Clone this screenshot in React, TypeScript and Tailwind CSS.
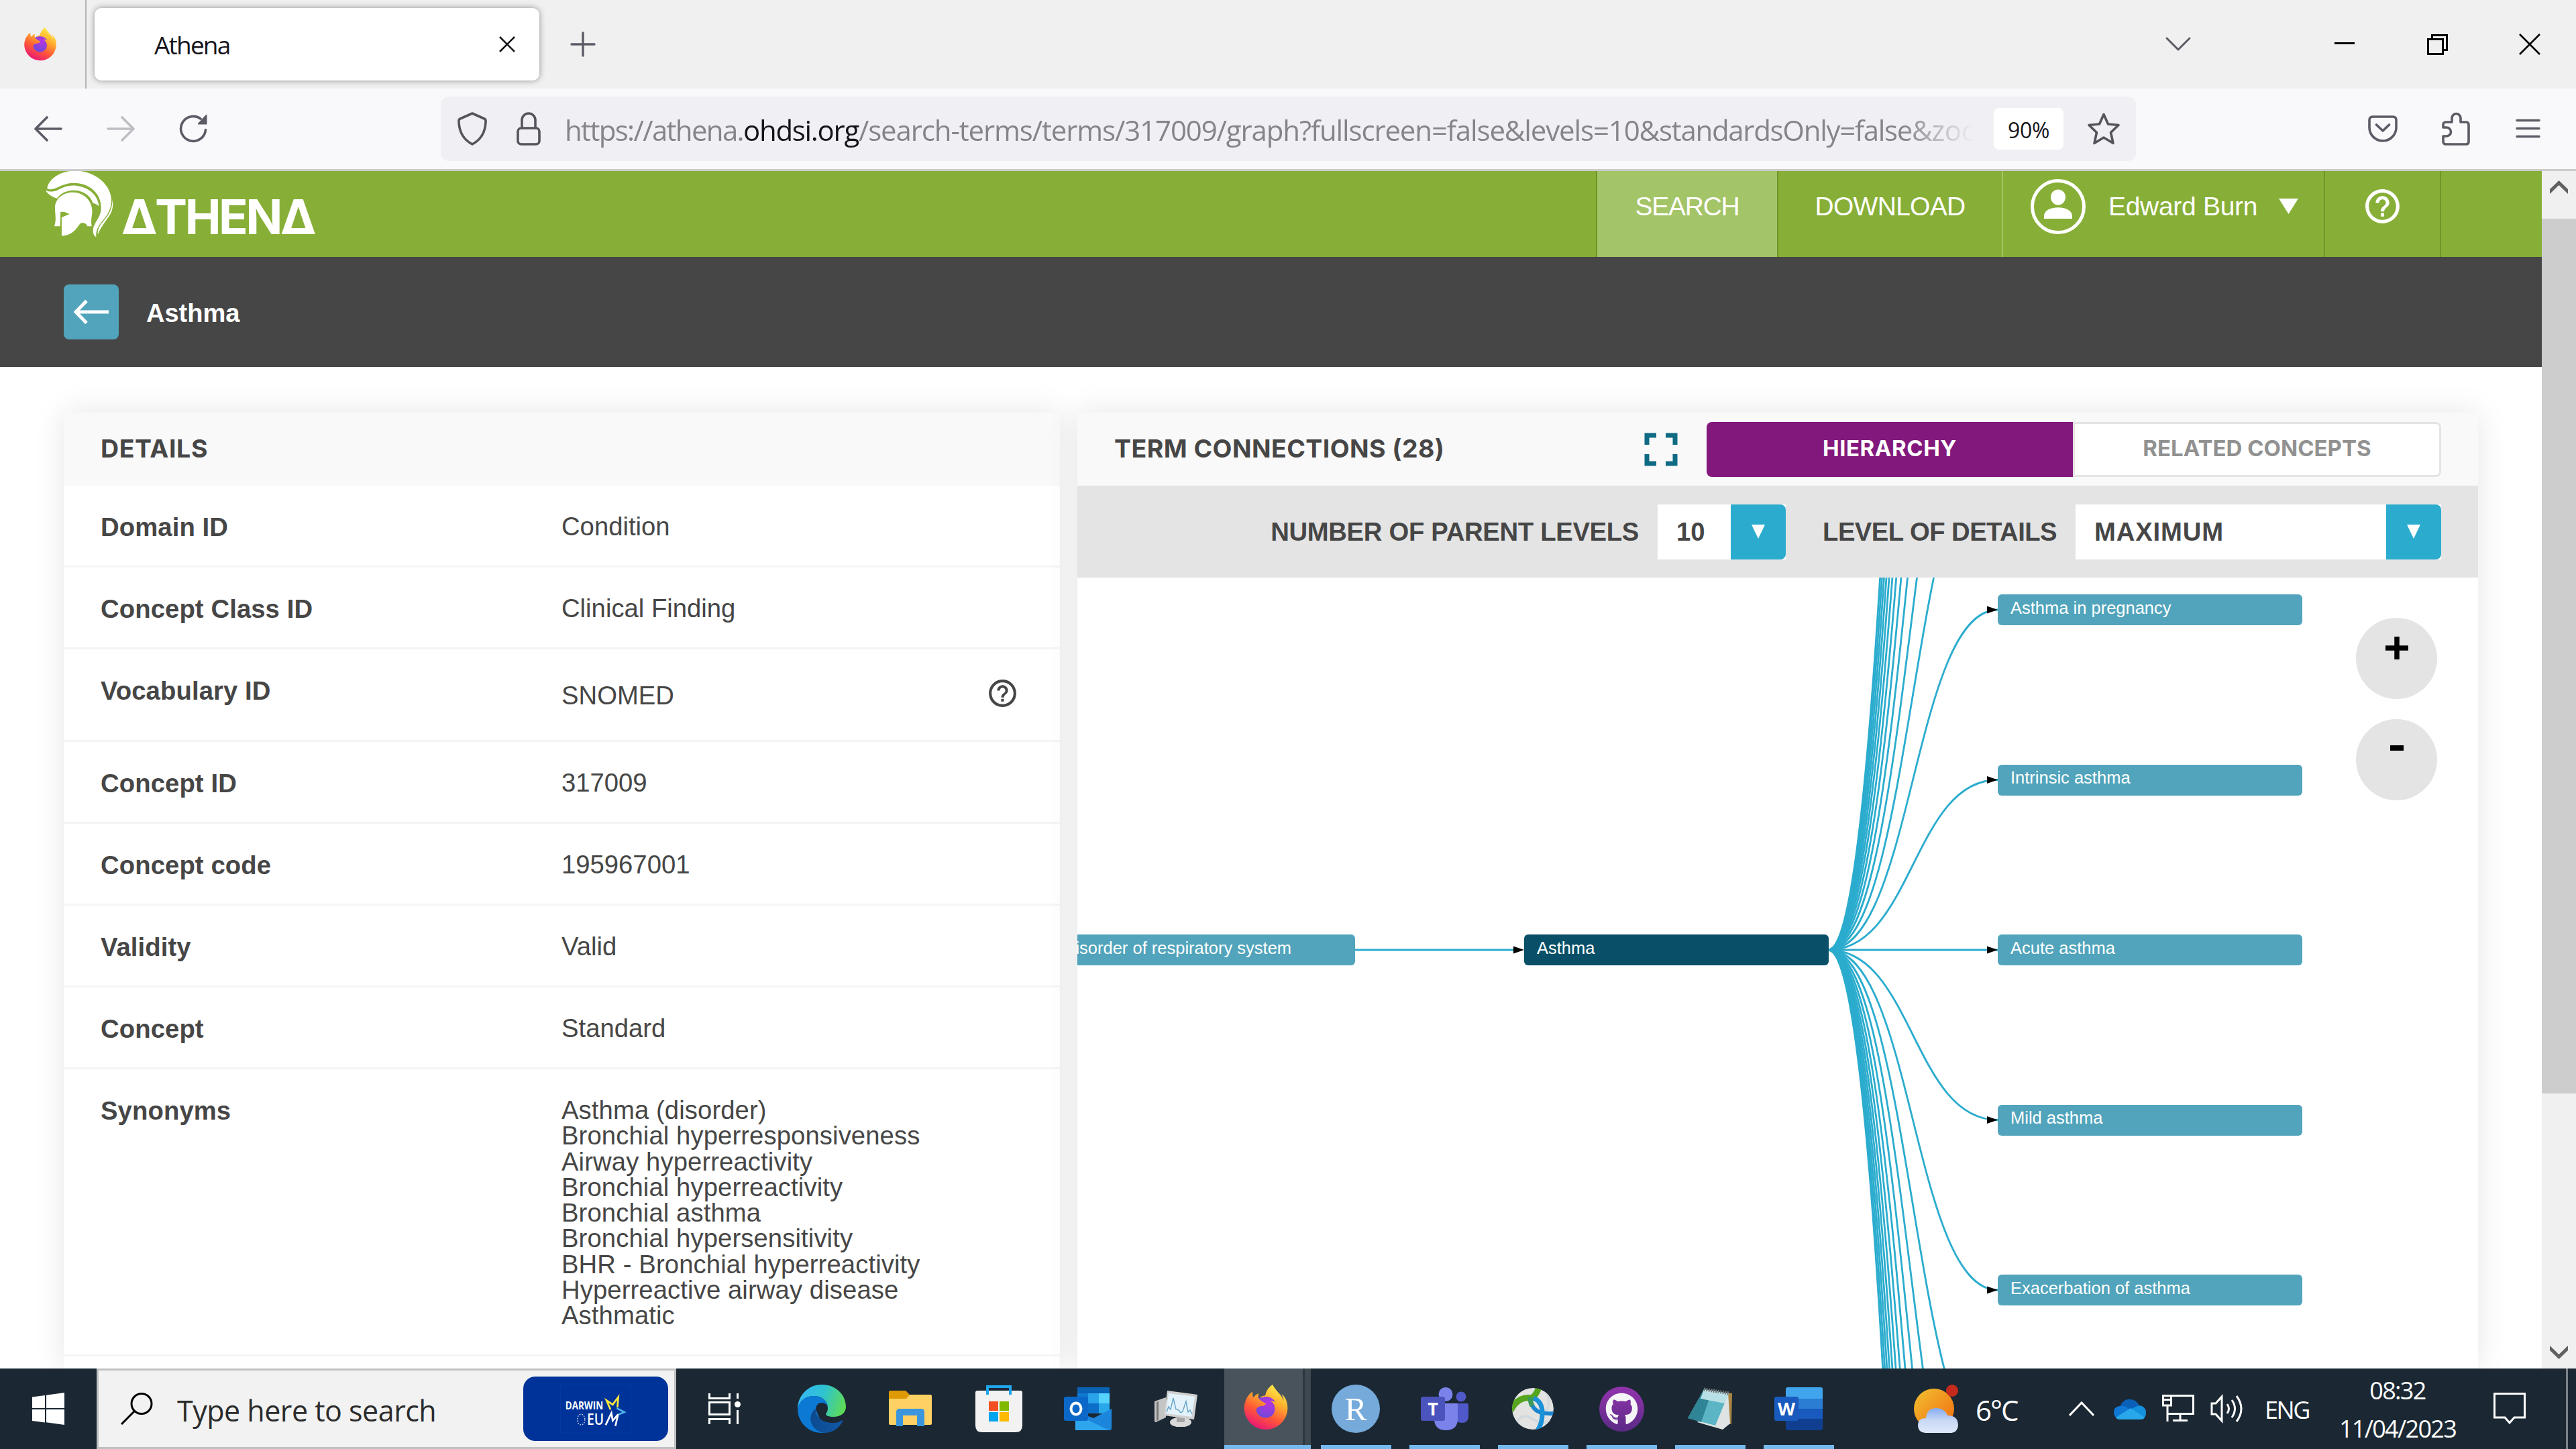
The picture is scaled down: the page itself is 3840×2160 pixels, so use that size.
import React from "react";
import { MdFullscreen, MdHelpOutline } from "react-icons/md";
import { FaFirefoxBrowser, FaGithub } from "react-icons/fa";

const SANS = "font-['Liberation_Sans',sans-serif]";
const UI = "font-['Open_Sans',sans-serif]";
const DISPLAY = "font-['Inter',sans-serif]";

const rows = [
  ["Domain ID", "Condition"],
  ["Concept Class ID", "Clinical Finding"],
  ["Vocabulary ID", "SNOMED"],
  ["Concept ID", "317009"],
  ["Concept code", "195967001"],
  ["Validity", "Valid"],
  ["Concept", "Standard"],
];

const synonyms = [
  "Asthma (disorder)",
  "Bronchial hyperresponsiveness",
  "Airway hyperreactivity",
  "Bronchial hyperreactivity",
  "Bronchial asthma",
  "Bronchial hypersensitivity",
  "BHR - Bronchial hyperreactivity",
  "Hyperreactive airway disease",
  "Asthmatic",
];

function Firefox({ size, id }: { size: number; id: string }) {
  return (
    <span className="relative flex shrink-0">
      <svg width={size} height={size} viewBox="0 0 64 64">
        <defs>
          <linearGradient id={id} x1="0.8" y1="0" x2="0.3" y2="1">
            <stop offset="0" stopColor="#fff44f" />
            <stop offset="0.35" stopColor="#ffb02e" />
            <stop offset="0.65" stopColor="#ff5a36" />
            <stop offset="1" stopColor="#e8137a" />
          </linearGradient>
          <radialGradient id={id + "g"} cx="0.6" cy="0.3" r="0.8">
            <stop offset="0" stopColor="#b833e1" />
            <stop offset="1" stopColor="#5a4fd8" />
          </radialGradient>
        </defs>
        <circle cx="32" cy="33" r="17" fill={`url(#${id}g)`} />
      </svg>
      <FaFirefoxBrowser size={size} className="absolute inset-0" style={{ fill: `url(#${id})` }} />
    </span>
  );
}

function TabStrip() {
  return (
    <div className="flex h-[132px] shrink-0 items-center bg-[#f0f0f0]">
      <div className="flex h-full w-[129px] items-center border-r-2 border-[#b4b4b4] pl-[35px]">
        <Firefox size={50} id="ffTab" />
      </div>
      <div className="ml-3 flex h-[108px] w-[663px] items-center justify-between rounded-[10px] bg-white pr-[34px] pl-[89px] shadow-[0_0_10px_rgba(0,0,0,0.4)]">
        <span className={`${UI} pt-px text-[37px] leading-none tracking-[-1.8px] text-[#15141a]`}>Athena</span>
        <svg width="28" height="28" viewBox="0 0 28 28" stroke="#15141a" strokeWidth="2.6" fill="none">
          <path d="M3 3 25 25M25 3 3 25" />
        </svg>
      </div>
      <svg className="ml-[46px]" width="38" height="38" viewBox="0 0 38 38" stroke="#5b5b66" strokeWidth="3.4" strokeLinecap="round">
        <path d="M19 2v34M2 19h34" />
      </svg>
      <div className="flex-1" />
      <svg width="40" height="24" viewBox="0 0 40 24" stroke="#5b5b66" strokeWidth="3" fill="none" strokeLinecap="round" strokeLinejoin="round">
        <path d="M3 3 20 20 37 3" />
      </svg>
      <svg className="ml-[213px]" width="30" height="30" viewBox="0 0 30 30" stroke="#000" strokeWidth="3">
        <path d="M0 13.500h30" />
      </svg>
      <svg className="ml-[108px]" width="31" height="31" viewBox="0 0 31 31" stroke="#000" strokeWidth="3" fill="none">
        <path d="M1.500 7.500h22v22h-22zM7.500 7.500v-6h22v22h-6" />
      </svg>
      <svg className="mr-[53px] ml-[106px]" width="32" height="32" viewBox="0 0 32 32" stroke="#000" strokeWidth="2.600">
        <path d="M1 1 31 31M31 1 1 31" />
      </svg>
    </div>
  );
}

function Toolbar() {
  return (
    <div className="flex h-[123px] shrink-0 items-center border-b-3 border-[#cccccc] bg-[#f9f9fb] pl-[51px]">
      <svg width="42" height="38" viewBox="0 0 42 38" stroke="#5b5b66" strokeWidth="3.600" fill="none" strokeLinecap="round" strokeLinejoin="round">
        <path d="M40 19H2M19 2 2 19l17 17" />
      </svg>
      <svg className="ml-[66px]" width="42" height="38" viewBox="0 0 42 38" stroke="#bdbdc4" strokeWidth="3.600" fill="none" strokeLinecap="round" strokeLinejoin="round">
        <path d="M2 19h38M23 2l17 17-17 17" />
      </svg>
      <svg className="ml-[65px]" width="44" height="44" viewBox="0 0 44 44" fill="none">
        <path d="M40.500 23.500A18.500 18.500 0 1 1 33 7" stroke="#5b5b66" strokeWidth="3.600" strokeLinecap="round" />
        <path d="M42.500 1.500v14H30q-2 0-.5-2L40.500 1.500q2-1.500 2 0z" fill="#5b5b66" />
      </svg>
      <div className="ml-[347px] flex h-[96px] w-[2527px] items-center rounded-[12px] bg-[#f0f0f4] pl-[25px]">
        <svg width="44" height="50" viewBox="0 0 44 50" stroke="#54545c" strokeWidth="3.600" fill="none" strokeLinejoin="round">
          <path d="M22 2 40 10Q42.500 11 42 15 41 38 22 48 3 38 2 15 1.500 11 4 10Z" />
        </svg>
        <svg className="ml-[44px]" width="36" height="50" viewBox="0 0 36 50" stroke="#54545c" strokeWidth="3.600" fill="none">
          <rect x="2" y="24" width="32" height="24" rx="5" />
          <path d="M8 24V12a10 10 0 0 1 20 0v12" />
        </svg>
        <div className="ml-[36px] flex w-[2110px] [mask-image:linear-gradient(to_right,black_94.500%,transparent_99.500%)]">
          <span className={`${UI} pt-[12px] pb-2 text-[42px] leading-none tracking-[-1.3px] whitespace-nowrap text-[#84848b]`}>
            <span className="tracking-[-1.67px]">https://athena.</span>
            <span className="text-[#15141a]">ohdsi.org</span>
            <span className="tracking-[-1.13px]">/search-terms/terms/317009/graph?fullscreen=false&amp;levels=10&amp;</span>
            standardsOnly=false&amp;<span className="tracking-[-0.3px]">zoo</span>
          </span>
        </div>
        <div className="ml-[20px] flex h-[62px] w-[104px] items-center justify-center rounded-[8px] bg-white">
          <span className={`${UI} pt-[3px] text-[32px] leading-none tracking-[-0.3px] text-[#15141a]`}>90%</span>
        </div>
        <svg className="ml-[35px]" width="50" height="48" viewBox="0 0 50 48" stroke="#54545c" strokeWidth="3.600" fill="none" strokeLinejoin="round">
          <path d="M25 2.500 31.500 17 47 18.500 35.500 29.500 39 45.500 25 37 11 45.500 14.500 29.500 3 18.500 18.500 17Z" />
        </svg>
      </div>
      <div className="flex-1" />
      <svg width="44" height="40" viewBox="0 0 44 40" stroke="#5b5b66" strokeWidth="3.600" fill="none" strokeLinecap="round" strokeLinejoin="round">
        <path d="M7 2h30q5 0 5 5v11a20 20 0 0 1-40 0V7q0-5 5-5z" />
        <path d="M12.500 14 22 23l9.500-9" />
      </svg>
      <svg className="ml-[66px]" width="42" height="50" viewBox="0 0 42 50" stroke="#5b5b66" strokeWidth="3.600" fill="none" strokeLinejoin="round">
        <path d="M15 15V9a6.500 6.500 0 0 1 13 0v6h8q4 0 4 4v25q0 4-4 4H6q-4 0-4-4v-8h5a6.500 6.500 0 0 0 0-13H2v-4q0-4 4-4z" />
      </svg>
      <svg className="mr-[53px] ml-[68px]" width="37" height="30" viewBox="0 0 37 30" stroke="#5b5b66" strokeWidth="3.400" strokeLinecap="round">
        <path d="M2 2.500h33M2 14.500h33M2 26.500h33" />
      </svg>
    </div>
  );
}

function Helmet() {
  return (
    <svg width="103" height="100" viewBox="20 15 310 300" fill="#fff">
      <path d="M30 92C36 50 90 12 160 13C250 16 320 80 318 150C319 190 290 228 264 260C250 278 248 295 250 310C238 305 232 290 238 265C250 235 272 215 272 180C272 110 215 68 150 68C110 68 80 88 60 94C46 98 36 97 30 92Z" />
      <path d="M24 100C40 110 60 107 75 101C105 84 140 72 180 84C230 98 258 130 262 172C255 166 248 160 235 158C225 125 190 100 148 101C115 102 90 115 75 137C55 132 30 118 24 100Z" />
      <path d="M322 120C331 155 328 190 311 216C295 240 270 268 257 304C250 285 260 264 274 246C300 215 324 190 322 120Z" stroke="#87af37" strokeWidth="4" />
      <path d="M65 180C65 140 100 110 145 110C200 110 235 155 232 200C230 220 225 240 230 262L210 262C206 248 190 244 178 250C160 275 140 305 95 305V222L130 208C115 198 100 196 90 198L88 262H62C72 235 66 215 65 180Z" />
    </svg>
  );
}

function SiteHeader() {
  const cell = "flex h-full items-center pb-[23px] text-white";
  return (
    <div className="flex h-[128px] shrink-0 bg-[#87af37]">
      <div className="flex h-full flex-1 items-start pl-[67px]">
        <Helmet />
        <span className={`${DISPLAY} mt-[32px] ml-[11px] text-[72px] leading-none font-bold tracking-[-3.4px] whitespace-nowrap text-white`}>ΔTHENΔ</span>
      </div>
      <div className={`${cell} ${SANS} w-[270px] justify-center border-l-2 border-[#6f9426] bg-[#a4c468] text-[39px] leading-none tracking-[-1.26px]`}>
        SEARCH
      </div>
      <div className={`${cell} ${SANS} w-[335px] justify-center border-l-2 border-[#6f9426] text-[39px] leading-none tracking-[-0.7px]`}>
        DOWNLOAD
      </div>
      <div className={`${cell} ${SANS} w-[480px] border-l-2 border-[#a4c468] pl-[41px] text-[39px] leading-none tracking-[-0.3px]`}>
        <svg width="82" height="82" viewBox="0 0 82 82">
          <circle cx="41" cy="41" r="38.500" fill="none" stroke="#fff" strokeWidth="5" />
          <ellipse cx="41" cy="27" rx="11" ry="11.500" fill="#fff" />
          <path d="M20 59V55C20 38 62 38 62 55v4z" fill="#fff" />
        </svg>
        <span className="ml-[34px]">Edward Burn</span>
        <svg className="ml-[32px]" width="29" height="23" viewBox="0 0 29 23" fill="#fff">
          <path d="M0 0h29L14.500 23z" />
        </svg>
      </div>
      <div className={`${cell} w-[173px] justify-center border-l-2 border-[#6f9426]`}>
        <MdHelpOutline size={61} />
      </div>
      <div className="h-full w-[152px] border-l-2 border-[#6f9426]" />
    </div>
  );
}

function TitleBar() {
  return (
    <div className="flex h-[164px] shrink-0 items-center bg-[#464646] pl-[95px]">
      <div className="flex h-[82px] w-[82px] items-center justify-center rounded-[8px] bg-[#51a4bb]">
        <svg width="52" height="36" viewBox="0 0 52 36" stroke="#fff" strokeWidth="5" fill="none">
          <path d="M52 18H4M19 1.500 3 18l16 16.500" />
        </svg>
      </div>
      <span className={`${SANS} ml-[41px] pt-1 text-[38px] leading-none font-bold text-white`}>Asthma</span>
    </div>
  );
}

function Details() {
  return (
    <div className={`${SANS} w-[1485px] shrink-0 bg-white text-[38.250px] text-[#464646] shadow-[0_0_44px_rgba(0,0,0,0.1)]`}>
      <div className="flex h-[109px] items-center bg-[#f9f9f9] pb-[2px] pl-[55px]">
        <span className={`${DISPLAY} text-[37.500px] leading-none font-bold tracking-[0.6px]`}>DETAILS</span>
      </div>
      {rows.map(([k, v]) => {
        const tall = k === "Vocabulary ID";
        return (
          <div key={k} className={`flex border-b-3 border-[#f5f5f5] pl-[55px] ${tall ? "h-[138px]" : "h-[122px]"}`}>
            <div className="flex h-[122px] w-[687px] items-center pt-[2px] leading-none font-bold tracking-[0.1px]">{k}</div>
            <div className="flex h-full flex-1 items-center justify-between pt-[4px] pr-[61px] leading-none">
              {v}
              {tall && <MdHelpOutline size={49} className="mb-2" />}
            </div>
          </div>
        );
      })}
      <div className="flex h-[428px] border-b-3 border-[#f5f5f5] pt-[42px] pl-[55px] leading-[38.250px]">
        <div className="w-[687px] pt-px font-bold tracking-[0.1px]">Synonyms</div>
        <div className="tracking-[0.1px]">
          {synonyms.map((s) => (
            <div key={s}>{s}</div>
          ))}
        </div>
      </div>
    </div>
  );
}

function DropButton() {
  return (
    <div className="flex h-full w-[82px] items-center justify-center rounded-r-[8px] bg-[#2bacce]">
      <svg width="20" height="21" viewBox="0 0 20 21" fill="#fff">
        <path d="M0 0h20L10 21z" />
      </svg>
    </div>
  );
}

const children: [number, string][] = [
  [48, "Asthma in pregnancy"],
  [301.5, "Intrinsic asthma"],
  [555, "Acute asthma"],
  [808.5, "Mild asthma"],
  [1062, "Exacerbation of asthma"],
];

function Node({ x, y, label, dark }: { x: number; y: number; label: string; dark?: boolean }) {
  return (
    <div
      className={`absolute flex h-[46px] w-[454px] items-center rounded-[6px] pb-[5px] pl-[19px] text-[25.500px] leading-none whitespace-nowrap text-white ${dark ? "bg-[#084f67]" : "bg-[#51a4bb]"}`}
      style={{ left: x, top: y - 23 }}
    >
      {label}
    </div>
  );
}

function Graph() {
  const offsets = Array.from({ length: 27 }, (_, i) => i - 13);
  return (
    <div className={`${SANS} relative h-[1179px] overflow-hidden bg-white`}>
      <svg className="absolute inset-0" width="2088" height="1179" viewBox="0 0 2088 1179" fill="none">
        <g stroke="#2bacce" strokeWidth="2.800">
          <path d="M413 555H652" />
          {offsets.map((o) => {
            const y = 555 + o * 253.5;
            return <path key={o} d={`M1119 555C1245.500 555 1245.500 ${y} 1372 ${y}`} />;
          })}
        </g>
        <g fill="#000">
          <path d="M650 549.500l16 5.500-16 5.500z" />
          {children.map(([y]) => (
            <path key={y} d={`M1356 ${y - 5.5}l16 5.500-16 5.500z`} />
          ))}
        </g>
      </svg>
      <Node x={-40} y={555} label="Disorder of respiratory system" />
      <Node x={666} y={555} label="Asthma" dark />
      {children.map(([y, label]) => (
        <Node key={label} x={1372} y={y} label={label} />
      ))}
      <div className="absolute top-[60px] right-[61px] flex flex-col gap-[30px]">
        <div className="flex h-[121px] w-[121px] justify-center rounded-full bg-[#e4e4e4] pt-[28px]">
          <svg width="34" height="34" viewBox="0 0 34 34" stroke="#000" strokeWidth="7.500">
            <path d="M0 17h34M17 0v34" />
          </svg>
        </div>
        <div className="flex h-[121px] w-[121px] justify-center rounded-full bg-[#e4e4e4] pt-[39px]">
          <svg width="20" height="8" viewBox="0 0 20 8">
            <path d="M0 0h20v8H0z" fill="#000" />
          </svg>
        </div>
      </div>
    </div>
  );
}

function Connections() {
  return (
    <div className="w-[2088px] shrink-0 bg-white text-[#464646] shadow-[0_0_44px_rgba(0,0,0,0.1)]">
      <div className={`${DISPLAY} flex h-[109px] items-center bg-[#f9f9f9] pr-[55px] pl-[55px] leading-none font-bold`}>
        <span className="pb-[2px] text-[37.500px] tracking-[0.43px] whitespace-nowrap">TERM CONNECTIONS (28)</span>
        <div className="flex-1" />
        <MdFullscreen size={84} className="mr-[26px] text-[#0f6a84]" />
        <div className="flex h-[82px] w-[546px] items-center justify-center rounded-l-[8px] bg-[#82187c] pb-[2px] text-[33px] tracking-[0.55px] text-white">
          HIERARCHY
        </div>
        <div className="flex h-[82px] w-[549px] items-center justify-center rounded-r-[8px] border-3 border-[#e4e4e4] bg-white pb-[2px] text-[33px] text-[#919191]">
          RELATED CONCEPTS
        </div>
      </div>
      <div className={`${SANS} flex h-[137px] items-center justify-end bg-[#e4e4e4] pr-[55px] text-[38.250px] leading-none font-bold`}>
        <span className="pt-[2px] tracking-[-0.31px]">NUMBER OF PARENT LEVELS</span>
        <div className="ml-[28px] flex h-[82px] w-[191px] items-center justify-between bg-white pl-[28px]">
          <span className="pt-[2px]">10</span>
          <DropButton />
        </div>
        <span className="ml-[55px] pt-[2px] tracking-[-0.55px]">LEVEL OF DETAILS</span>
        <div className="ml-[28px] flex h-[82px] w-[545px] items-center justify-between bg-white pl-[28px]">
          <span className="pt-[2px] tracking-[0.86px]">MAXIMUM</span>
          <DropButton />
        </div>
      </div>
      <Graph />
    </div>
  );
}

function Scrollbar() {
  return (
    <div className="flex w-[51px] shrink-0 flex-col items-center bg-[#f0f0f0]">
      <svg className="mt-[14px] mb-[37px] shrink-0" width="27" height="20" viewBox="0 0 27 20">
        <path d="M0 20V13L13.500 0 27 13v7L13.500 7z" fill="#606060" />
      </svg>
      <div className="h-[1304px] w-full bg-[#cdcdcd]" />
      <div className="flex-1" />
      <svg className="mb-[14px] shrink-0" width="27" height="20" viewBox="0 0 27 20">
        <path d="M0 0v7l13.500 13L27 7V0L13.500 13z" fill="#606060" />
      </svg>
    </div>
  );
}

function Edge() {
  return (
    <svg width="72" height="72" viewBox="0 0 72 72">
      <defs>
        <linearGradient id="eTop" x1="0" y1="0.400" x2="1" y2="0.600">
          <stop offset="0" stopColor="#35b8f5" />
          <stop offset="0.500" stopColor="#2fc3cf" />
          <stop offset="1" stopColor="#5fdc52" />
        </linearGradient>
        <linearGradient id="eDark" x1="0" y1="0.500" x2="1" y2="0.500">
          <stop offset="0" stopColor="#0d4a8f" />
          <stop offset="1" stopColor="#1059a8" />
        </linearGradient>
      </defs>
      <path d="M0 37C0 16 16 0 36 0C58 0 72 16 72 33C72 43 63 48 54 48C46 48 42 46 42 44C42 43 45 41 45 35C45 24 36 17 24 17C10 17 2 26 0 37Z" fill="url(#eTop)" />
      <path d="M0 36C2 24 12 17 24 17C36 17 45 25 45 34C44 29 40 27 36 27C30 27 27 32 27 37L42 72H36C16 72 0 56 0 36Z" fill="#0c7ad4" />
      <path d="M27 36C20 40 18 50 20 56C24 68 34 72 42 72C54 71 62 64 67 55C67 53 66 53 65 54C60 57 54 57.500 50 57C36 56 27 48 27 36Z" fill="url(#eDark)" />
    </svg>
  );
}

function Folder() {
  return (
    <svg width="64" height="54" viewBox="0 0 64 54">
      <path d="M2 0h22q2 0 3 2l4 4-4 6H0V2q0-2 2-2z" fill="#dd9a05" />
      <path d="M0 12h26l5-6h31q2 0 2 2v41q0 2-2 2H2q-2 0-2-2z" fill="#fdd163" />
      <path d="M11 53V32q0-5 5-5h32q5 0 5 5v21H42V37H21v16z" fill="#3b96dd" />
    </svg>
  );
}

function Store() {
  return (
    <svg width="70" height="70" viewBox="0 0 70 70">
      <path d="M3 8h64q3 0 3 3v49q0 10-10 10H10Q0 70 0 60V11q0-3 3-3z" fill="#f2f2f2" />
      <path d="M18 14V2h34v12" fill="none" stroke="#1fa5ec" strokeWidth="4" />
      <path d="M20 24h14v14H20z" fill="#f25022" />
      <path d="M36 24h14v14H36z" fill="#7fba00" />
      <path d="M20 40h14v14H20z" fill="#00a4ef" />
      <path d="M36 40h14v14H36z" fill="#ffb900" />
    </svg>
  );
}

function Outlook() {
  return (
    <svg width="71" height="64" viewBox="0 0 71 64">
      <path d="M23 0h42q3 0 3 3v33H20V3q0-3 3-3z" fill="#0f78d0" />
      <path d="M20 0h48v9H20z" fill="#0a62b4" />
      <path d="M36 9h16v15H36z" fill="#29a3ea" />
      <path d="M52 9h16v15H52z" fill="#55d3fc" />
      <path d="M52 24h16v15H52z" fill="#28a8ea" />
      <path d="M36 24h16v15H36z" fill="#0b6fc9" />
      <path d="M17 36l27 10 27-14v29q0 3-3 3H20q-3 0-3-3z" fill="#1c86dc" />
      <path d="M17 64V40l50 24z" fill="#2ea6ee" />
      <rect x="0" y="14" width="36" height="36" rx="3" fill="#0c68c8" />
      <ellipse cx="18" cy="32" rx="7.500" ry="8.500" fill="none" stroke="#fff" strokeWidth="4" />
    </svg>
  );
}

function Monitor() {
  return (
    <svg width="64" height="54" viewBox="0 0 64 54">
      <path d="M0 16l17-6v30L2 47q-2 0-2-2z" fill="#c4c4c4" />
      <path d="M3 17l3-1v28l-3 1z" fill="#777" />
      <ellipse cx="39" cy="47" rx="16" ry="7.500" fill="#d9d9d9" />
      <path d="M33 37h12v10H33z" fill="#a5a5a5" />
      <path d="M19 0l45 6-5 37-45-6z" fill="#d0d0d0" />
      <path d="M21 4l39 5-4.500 30-39-5z" fill="#e4f3fb" />
      <path d="M18 32l3-8 3 4 4-17 4 17 4 1 3 4 3-2 5-15 3 16 3-3 3 6" fill="none" stroke="#6ba6c9" strokeWidth="1.500" />
    </svg>
  );
}

function Teams() {
  return (
    <svg width="71" height="64" viewBox="0 0 71 64">
      <circle cx="60" cy="14" r="7.500" fill="#5059c9" />
      <path d="M52 24h17q2 0 2 2v17q0 10-10 10-9 0-9-10z" fill="#5059c9" />
      <circle cx="37" cy="10.500" r="10.500" fill="#7b83eb" />
      <path d="M22 24h31q2 0 2 2v21q0 17-17.500 17T20 47z" fill="#7b83eb" />
      <rect x="0" y="14" width="36" height="36" rx="3" fill="#4b53bc" />
      <text x="18" y="42" textAnchor="middle" fontFamily="Open Sans" fontWeight="700" fontSize="27" fill="#fff">T</text>
    </svg>
  );
}

function Swirl() {
  return (
    <svg width="62" height="62" viewBox="0 0 62 62">
      <defs>
        <clipPath id="swirlClip">
          <circle cx="31" cy="31" r="31" />
        </clipPath>
      </defs>
      <g clipPath="url(#swirlClip)" fill="none">
        <circle cx="31" cy="31" r="31" fill="#e3e4e2" />
        <path d="M8 50q8-14 24-3t24 0M50 4q10 20 0 30" stroke="#d3dade" strokeWidth="4" />
        <path d="M-2 34Q8 12 30 15 38 8 40-2" stroke="#56a51c" strokeWidth="9" />
        <path d="M27 14q1 14 10 20 8 5 25 4" stroke="#1a86cf" strokeWidth="6" />
        <path d="M27 14q0 7 3 13" stroke="#3c9a5a" strokeWidth="7" />
        <path d="M32 15q14 6 13 24 0 14-7 24" stroke="#1b91d8" strokeWidth="7" />
      </g>
    </svg>
  );
}

function Notepad() {
  return (
    <svg width="67" height="64" viewBox="0 0 67 64">
      <path d="M58 8l8 1-1 46-7-1z" fill="#a98543" />
      <path d="M60 8l3 46-11 9-38-11z" fill="#dfe3e3" />
      <path d="M24 3l37 6-20 48L0 46z" fill="#5bb5c4" />
      <path d="M24 3l12 2-16 47L0 46z" fill="#2f8496" />
      <path d="M24 3l37 6-6 15-36-7z" fill="#b9e0e6" />
      <path d="M24 3l38 6" stroke="#777" strokeWidth="5" strokeDasharray="2 1.500" />
    </svg>
  );
}

function Word() {
  return (
    <svg width="72" height="64" viewBox="0 0 72 64">
      <path d="M20 0h49q3 0 3 3v14H17V3q0-3 3-3z" fill="#41a5ee" />
      <path d="M17 17h55v15H17z" fill="#2b7cd3" />
      <path d="M17 32h55v15H17z" fill="#185abd" />
      <path d="M17 47h55v14q0 3-3 3H20q-3 0-3-3z" fill="#103f91" />
      <rect x="0" y="14" width="36" height="36" rx="3" fill="#185abd" />
      <text x="18" y="41.500" textAnchor="middle" fontFamily="Open Sans" fontWeight="700" fontSize="27" fill="#fff">W</text>
    </svg>
  );
}

function RStudio() {
  return (
    <div className="flex h-[72px] w-[72px] items-center justify-center rounded-full bg-[#75aadb]">
      <span className="font-['Liberation_Serif',serif] text-[49px] leading-none text-white">R</span>
    </div>
  );
}

function GitHub() {
  return (
    <div className="flex h-[67px] w-[67px] items-center justify-center rounded-full bg-linear-to-b from-[#9333ad] to-[#5b2a86]">
      <FaGithub size={49} color="#f5f5f8" />
    </div>
  );
}

function AppCell({ children, underline }: { children: React.ReactNode; underline?: boolean }) {
  return (
    <div className="relative flex h-full w-[132px] shrink-0 items-center justify-center pl-[4px]">
      {children}
      {underline && <div className="absolute bottom-0 left-4 h-[6px] w-[105px] bg-[#76b9ed]" />}
    </div>
  );
}

function DarwinBadge() {
  return (
    <div className="flex h-[96px] w-[216px] items-center justify-center rounded-[18px] bg-[#003399]">
      <svg width="107" height="73" viewBox="195 70 320 220">
        <rect x="196" y="72" width="316" height="215" fill="none" stroke="#0c3ca3" strokeWidth="2" />
        <g fontFamily="Open Sans" fill="#fff">
          <text x="217" y="181" fontWeight="700" fontSize="50" textLength="170" lengthAdjust="spacingAndGlyphs">DARWIN</text>
          <text x="314" y="252" fontWeight="600" fontSize="73" textLength="76" lengthAdjust="spacingAndGlyphs">EU</text>
        </g>
        <ellipse cx="288" cy="227" rx="17" ry="24" fill="none" stroke="#dfe6f5" strokeWidth="4" strokeDasharray="5 6" />
        <path d="M420 182 402 141 430 160 455 126 451 172" fill="none" stroke="#ffe93b" strokeWidth="8" />
        <path d="M448 176 482 194 456 204" fill="none" stroke="#4fb3ea" strokeWidth="8" />
        <path d="M398 252 424 198 430 232 454 204 442 256" fill="none" stroke="#fff" strokeWidth="8" />
      </svg>
    </div>
  );
}

function Taskbar() {
  return (
    <div className={`${UI} flex h-[120px] shrink-0 items-center bg-[#1b2833] text-white`}>
      <div className="flex h-full w-[144px] shrink-0 items-center justify-center">
        <svg width="48" height="48" viewBox="0 0 48 48" fill="#fff">
          <path d="M0 6.500 19 4v19H0zM21 3.700 48 0v23H21zM0 25h19v19.500L0 42zM21 25h27v23l-27-3.700z" />
        </svg>
      </div>
      <div className="flex h-full w-[864px] shrink-0 items-center border-3 border-[#c0c0c0] bg-[#f2f2f2] pl-[33px]">
        <svg width="48" height="48" viewBox="0 0 48 48" stroke="#000" strokeWidth="3" fill="none">
          <circle cx="31" cy="16.500" r="15" />
          <path d="M20.500 27.500 1 47" />
        </svg>
        <span className="ml-[36px] pt-[4px] text-[43px] leading-none tracking-[-0.5px] whitespace-nowrap text-[#2b2b2b]">Type here to search</span>
        <div className="flex-1" />
        <div className="mr-[9px]">
          <DarwinBadge />
        </div>
      </div>
      <div className="mr-[9px] flex h-full w-[144px] shrink-0 items-center justify-center">
        <svg width="48" height="46" viewBox="0 0 48 46" fill="none" stroke="#fff" strokeWidth="3">
          <path d="M1.500 0v7.500h30V0M1.500 13.500h30v18h-30zM1.500 46v-7.500h30V46M43.500 0v8M43.500 25v21" />
          <circle cx="43.500" cy="16.500" r="4.500" fill="#fff" stroke="none" />
        </svg>
      </div>
      <div className="-ml-1 flex h-full">
        <AppCell><Edge /></AppCell>
        <AppCell><Folder /></AppCell>
        <AppCell><Store /></AppCell>
        <AppCell><Outlook /></AppCell>
        <AppCell><Monitor /></AppCell>
      </div>
      <div className="mr-[-1px] ml-[8px] flex h-full w-[129px] shrink-0 flex-col border-b-6 border-[#76b9ed]">
        <div className="flex flex-1">
          <div className="flex w-[117px] items-center bg-[#49535b] pt-[2px] pl-[28px]">
            <Firefox size={68} id="ffBar" />
          </div>
          <div className="w-[3px] bg-[#2c363e]" />
          <div className="w-[9px] bg-[#3e484f]" />
        </div>
      </div>
      <div className="flex h-full">
        <AppCell underline><RStudio /></AppCell>
        <AppCell underline><Teams /></AppCell>
        <AppCell underline><Swirl /></AppCell>
        <AppCell underline><GitHub /></AppCell>
        <AppCell underline><Notepad /></AppCell>
        <AppCell underline><Word /></AppCell>
      </div>
      <svg className="ml-[108px] shrink-0" width="66" height="72" viewBox="0 0 66 72">
        <defs>
          <linearGradient id="sun" x1="0" y1="0" x2="1" y2="1">
            <stop offset="0" stopColor="#f2c230" />
            <stop offset="1" stopColor="#f06a10" />
          </linearGradient>
          <linearGradient id="cloud" x1="0" y1="0" x2="0" y2="1">
            <stop offset="0" stopColor="#86abf0" />
            <stop offset="0.500" stopColor="#c9d8f5" />
            <stop offset="1" stopColor="#dfe9fa" />
          </linearGradient>
        </defs>
        <circle cx="30" cy="36" r="30" fill="url(#sun)" />
        <circle cx="57" cy="9" r="9" fill="#c62a1c" />
        <path d="M17 72Q6 71 6 61 6 50 18 50 19 35 34 35 47 36 50 46 66 46 66 61 65 71 56 72z" fill="url(#cloud)" />
      </svg>
      <span className="ml-[26px] pt-[3px] text-[42px] leading-none tracking-[-2px]">6°C</span>
      <div className="flex-1" />
      <svg width="38" height="24" viewBox="0 0 38 24" fill="none" stroke="#fff" strokeWidth="3">
        <path d="M1 22 19 3l18 19" />
      </svg>
      <svg className="ml-[29px]" width="48" height="32" viewBox="0 0 48 32">
        <path d="M9 14a15 15 0 0 1 29-2l-14 8z" fill="#0a5fb8" />
        <path d="M9 12q10-2 16 7L6 31Q0 28 0 21q0-8 9-9z" fill="#0f78d4" />
        <path d="M37 11q11 1 11 11 0 6-4 9L22 18z" fill="#1490df" />
        <path d="M3 29 25 15 46 29q-2 3-6 3H9q-4 0-6-3z" fill="#28a8ea" />
      </svg>
      <svg className="ml-[24px]" width="48" height="42" viewBox="0 0 48 42" fill="none" stroke="#fff" strokeWidth="3">
        <path d="M15 1.500h31.500v27H9M1.500 1.500h12V16h-12zM1.500 7.500h12M8 16v24M27 29v8M16 38.500h22" />
      </svg>
      <svg className="ml-[24px]" width="49" height="44" viewBox="0 0 49 44" fill="none" stroke="#fff" strokeWidth="3">
        <path d="M2 14h6L17 4v36L8 30H2zM25 15q5 7 0 14M32 9q9 13 0 26M39 3q14 19 0 38" />
      </svg>
      <span className="ml-[32px] pt-[3px] text-[36px] leading-none tracking-[-2.4px]">ENG</span>
      <div className="ml-[44px] flex w-[176px] flex-col items-center gap-[20px] pt-[2px] text-[36px] leading-[37px] tracking-[-1.7px] whitespace-nowrap">
        <span>08:32</span>
        <span>11/04/2023</span>
      </div>
      <svg className="ml-[55px]" width="48" height="48" viewBox="0 0 48 48" fill="none" stroke="#fff" strokeWidth="3">
        <path d="M1.500 1.500h45V37H31l-7 8-7-8H1.500z" />
      </svg>
      <div className="mr-[12px] ml-[60px] h-full w-[3px] bg-[#7b828a]" />
    </div>
  );
}

export default function App() {
  return (
    <div className="flex h-[2160px] w-[3840px] flex-col overflow-hidden bg-white">
      <TabStrip />
      <Toolbar />
      <div className="flex min-h-0 flex-1">
        <div className="flex min-w-0 flex-1 flex-col overflow-hidden">
          <SiteHeader />
          <TitleBar />
          <div className="flex flex-1 gap-[26px] pt-[68px] pl-[95px]">
            <Details />
            <Connections />
          </div>
        </div>
        <Scrollbar />
      </div>
      <Taskbar />
    </div>
  );
}
